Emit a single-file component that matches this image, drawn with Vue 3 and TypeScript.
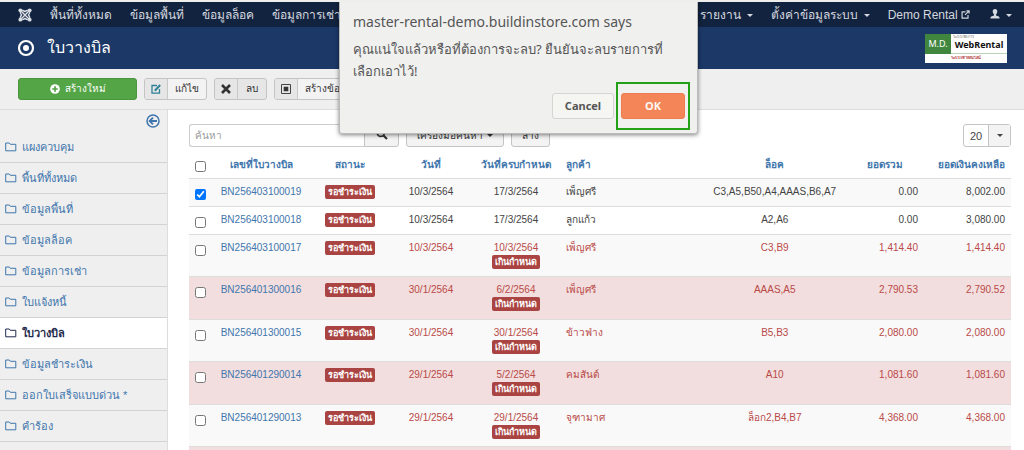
<script setup lang="ts">
import { ref } from 'vue'

interface Invoice {
  no: string
  date: string
  due: string
  customer: string
  lots: string
  total: string
  remaining: string
  overdue: boolean
}

const leftMenu = ['พื้นที่ทั้งหมด', 'ข้อมูลพื้นที่', 'ข้อมูลล็อค', 'ข้อมูลการเช่า']
const rightMenu = ['รายงาน', 'ตั้งค่าข้อมูลระบบ']
const sideMenu = [
  'แผงควบคุม',
  'พื้นที่ทั้งหมด',
  'ข้อมูลพื้นที่',
  'ข้อมูลล็อค',
  'ข้อมูลการเช่า',
  'ใบแจ้งหนี้',
  'ใบวางบิล',
  'ข้อมูลชำระเงิน',
  'ออกใบเสร็จแบบด่วน *',
  'คำร้อง',
]
const current = 'ใบวางบิล'

const invoices: Invoice[] = [
  { no: 'BN256403100019', date: '10/3/2564', due: '17/3/2564', customer: 'เพ็ญศรี', lots: 'C3,A5,B50,A4,AAAS,B6,A7', total: '0.00', remaining: '8,002.00', overdue: false },
  { no: 'BN256403100018', date: '10/3/2564', due: '17/3/2564', customer: 'ลูกแก้ว', lots: 'A2,A6', total: '0.00', remaining: '3,080.00', overdue: false },
  { no: 'BN256403100017', date: '10/3/2564', due: '10/3/2564', customer: 'เพ็ญศรี', lots: 'C3,B9', total: '1,414.40', remaining: '1,414.40', overdue: true },
  { no: 'BN256401300016', date: '30/1/2564', due: '6/2/2564', customer: 'เพ็ญศรี', lots: 'AAAS,A5', total: '2,790.53', remaining: '2,790.52', overdue: true },
  { no: 'BN256401300015', date: '30/1/2564', due: '30/1/2564', customer: 'ข้าวฟ่าง', lots: 'B5,B3', total: '2,080.00', remaining: '2,080.00', overdue: true },
  { no: 'BN256401290014', date: '29/1/2564', due: '5/2/2564', customer: 'คมสันต์', lots: 'A10', total: '1,081.60', remaining: '1,081.60', overdue: true },
  { no: 'BN256401290013', date: '29/1/2564', due: '29/1/2564', customer: 'จุฑามาศ', lots: 'ล็อก2,B4,B7', total: '4,368.00', remaining: '4,368.00', overdue: true },
]

const selected = ref<string[]>(['BN256403100019'])
const search = ref('')
const limit = ref('20')
</script>

<template>
  <div class="page">
    <nav class="topbar">
      <a href="#" class="brand" aria-label="Joomla">
        <svg viewBox="0 0 14 14" width="14" height="14" fill="none" stroke="#d9dde4">
          <path d="M2.500 2.500 9 9M11.500 2.500 5 9M2.500 11.500 9 5M11.500 11.500 5 5" stroke-width="1.500" />
          <path d="M2.200 4.200Q2.400 5.600 3.600 7 2.400 8.400 2.200 9.800M11.800 4.200Q11.600 5.600 10.400 7 11.600 8.400 11.800 9.800M4.200 2.200Q5.600 2.400 7 3.600 8.400 2.400 9.800 2.200M4.200 11.800Q5.600 11.600 7 10.400 8.400 11.600 9.800 11.800" stroke-width="1.400" />
          <g fill="#d9dde4" stroke="none">
            <circle cx="2.300" cy="2.300" r="1.900" /><circle cx="11.700" cy="2.300" r="1.900" />
            <circle cx="2.300" cy="11.700" r="1.900" /><circle cx="11.700" cy="11.700" r="1.900" />
          </g>
        </svg>
      </a>
      <a v-for="item in leftMenu" :key="item" href="#">{{ item }}</a>
      <span class="grow"></span>
      <a v-for="item in rightMenu" :key="item" href="#">{{ item }}<i class="caret"></i></a>
      <a href="#" class="site">Demo Rental
        <svg viewBox="0 0 10 10" width="9" height="9" fill="none" stroke="currentColor" stroke-width="1.300">
          <path d="M5 2H1.200v7h6.600V5.500M6 1h3v3M9 1 4.500 5.500" />
        </svg>
      </a>
      <a href="#" class="user" aria-label="User">
        <svg viewBox="0 0 10 10" width="10" height="10" fill="currentColor">
          <path d="M5 0C3.400 0 2.700 1.200 2.700 2.600c0 1.200.5 2.200 1.300 2.800v1L1.200 7.600Q.4 8 .4 9.500h9.200Q9.600 8 8.800 7.600L6 6.400v-1c.8-.6 1.300-1.600 1.300-2.800C7.300 1.200 6.600 0 5 0z" />
        </svg>
        <i class="caret"></i>
      </a>
    </nav>

    <header class="header">
      <svg viewBox="0 0 18 18" width="18" height="18">
        <circle cx="9" cy="9" r="7" fill="none" stroke="#fff" stroke-width="2.200" />
        <circle cx="9" cy="9" r="3" fill="#fff" />
      </svg>
      <h1>ใบวางบิล</h1>
      <div class="logo">
        <span class="md">M.D.</span>
        <span class="name"><small>ระบบจัดการ</small>WebRental</span>
        <span class="tag">ระบบเช่าออนไลน์</span>
      </div>
    </header>

    <div class="toolbar">
      <button type="button" class="create">
        <svg viewBox="0 0 10 10" width="10" height="10">
          <circle cx="5" cy="5" r="4.800" fill="#fff" />
          <path d="M5 2.200v5.600M2.200 5h5.600" stroke="#54a546" stroke-width="1.700" />
        </svg>
        สร้างใหม่
      </button>
      <button type="button" class="tool edit">
        <span class="ic">
          <svg viewBox="0 0 10 10" width="10" height="10" fill="none" stroke="#2f7f96">
            <path d="M6 1.500H1v7.700h7.500V5" stroke-width="1.300" />
            <path d="M3.800 6.700 9.200 1" stroke-width="2" />
          </svg>
        </span>
        <span class="lb">แก้ไข</span>
      </button>
      <button type="button" class="tool remove">
        <span class="ic">
          <svg viewBox="0 0 10 10" width="10" height="10" stroke="#333" stroke-width="2.600"><path d="M1 1l8 8M9 1 1 9" /></svg>
        </span>
        <span class="lb">ลบ</span>
      </button>
      <button type="button" class="tool make">
        <span class="ic">
          <svg viewBox="0 0 10 10" width="10" height="10"><path d="M.5.5h9v9h-9z" fill="none" stroke="#444" /><path d="M2.700 2.700h4.600v4.600H2.700z" fill="#333" /></svg>
        </span>
        <span class="lb">สร้างข้อมูล</span>
      </button>
    </div>

    <div class="body">
      <aside class="sidebar">
        <button type="button" class="collapse" aria-label="Collapse">
          <svg viewBox="0 0 14 14" width="14" height="14" fill="none" stroke="#3f76ad">
            <circle cx="7" cy="7" r="6" stroke-width="1.500" />
            <path d="M11 7H4M7 3.600 3.600 7 7 10.400" stroke-width="1.800" />
          </svg>
        </button>
        <a v-for="item in sideMenu" :key="item" href="#" :class="{ active: item === current }">
          <svg viewBox="0 0 12 10" width="12" height="10" fill="none" stroke="currentColor">
            <path d="M.7 8.800V1h3.600l1 1.300h5.500v6.500z" />
          </svg>
          {{ item }}
        </a>
      </aside>

      <main class="content">
        <form class="filters" @submit.prevent>
          <div class="group">
            <input v-model="search" type="text" placeholder="ค้นหา" aria-label="ค้นหา" />
            <button type="submit" class="btn find" aria-label="Search">
              <svg viewBox="0 0 12 12" width="12" height="12" fill="none" stroke="#333" stroke-width="1.600">
                <circle cx="4.800" cy="4.800" r="3.600" /><path d="M7.500 7.500 11 11" stroke-width="2.200" />
              </svg>
            </button>
          </div>
          <button type="button" class="btn tools">เครื่องมือค้นหา<i class="caret"></i></button>
          <button type="button" class="btn">ล้าง</button>
          <span class="grow"></span>
          <div class="limit">
            <select v-model="limit" aria-label="Limit"><option>20</option></select>
            <span><i class="caret"></i></span>
          </div>
        </form>

        <table>
          <colgroup>
            <col class="c-check" /><col class="c-no" /><col class="c-status" /><col class="c-date" /><col class="c-due" />
            <col /><col /><col class="c-total" /><col class="c-remaining" />
          </colgroup>
          <thead>
            <tr>
              <th><input type="checkbox" aria-label="All" /></th>
              <th>เลขที่ใบวางบิล</th>
              <th>สถานะ</th>
              <th>วันที่</th>
              <th>วันที่ครบกำหนด</th>
              <th class="left">ลูกค้า</th>
              <th>ล็อค</th>
              <th>ยอดรวม</th>
              <th class="right">ยอดเงินคงเหลือ</th>
            </tr>
          </thead>
          <tbody>
            <tr v-for="row in invoices" :key="row.no" :class="{ overdue: row.overdue }">
              <td><input v-model="selected" type="checkbox" :value="row.no" :aria-label="row.no" /></td>
              <td><a href="#">{{ row.no }}</a></td>
              <td><span class="badge">รอชำระเงิน</span></td>
              <td>{{ row.date }}</td>
              <td>{{ row.due }}<span v-if="row.overdue" class="badge late">เกินกำหนด</span></td>
              <td class="left">{{ row.customer }}</td>
              <td>{{ row.lots }}</td>
              <td class="right">{{ row.total }}</td>
              <td class="right">{{ row.remaining }}</td>
            </tr>
            <tr class="overdue"><td colspan="9"></td></tr>
          </tbody>
        </table>
      </main>
    </div>

    <div class="dialog" role="alertdialog" aria-labelledby="dialog-title">
      <h2 id="dialog-title">master-rental-demo.buildinstore.com says</h2>
      <p>คุณแน่ใจแล้วหรือที่ต้องการจะลบ? ยืนยันจะลบรายการที่<wbr />เลือกเอาไว้!</p>
      <div class="actions">
        <button type="button" class="cancel">Cancel</button>
        <span class="mark"><button type="button" class="ok">OK</button></span>
      </div>
    </div>
  </div>
</template>

<style>
html,
body {
  margin: 0;
  height: 100%;
  overflow: hidden;
  background: #fff;
}
#app {
  height: 100%;
}
</style>

<style scoped>
.page {
  position: relative;
  display: flex;
  flex-direction: column;
  height: 100%;
  overflow: hidden;
  border-top: 2px solid #eeeeec;
  box-sizing: border-box;
  font: 10px/14px 'Liberation Sans', Arial, sans-serif;
  color: #444;
}
.page * {
  box-sizing: border-box;
}
a {
  text-decoration: none;
  color: #3f76ad;
}
button,
input,
select {
  font: inherit;
  color: inherit;
  margin: 0;
}
svg {
  flex: none;
}
.grow {
  flex: 1;
}
.caret {
  display: inline-block;
  border: 3px solid transparent;
  border-top-color: currentColor;
  border-bottom: 0;
  vertical-align: middle;
}
.topbar {
  flex: none;
  display: flex;
  align-items: center;
  gap: 18px;
  height: 25px;
  padding: 0 12px 0 18px;
  background: #12233f;
  font-size: 12px;
}
.topbar a {
  color: #d4d8df;
  white-space: nowrap;
}
.topbar .brand {
  display: flex;
}
.topbar .caret {
  margin-left: 6px;
}
.topbar .user {
  margin-left: 2px;
}
.header {
  flex: none;
  display: flex;
  align-items: center;
  gap: 12px;
  height: 42px;
  padding: 0 17px;
  background: #1b3867;
}
.header h1 {
  flex: 1;
  margin: 0;
  font-size: 16px;
  line-height: 26px;
  font-weight: 400;
  color: #fff;
}
.logo {
  display: grid;
  grid-template-columns: 26px 1fr;
  grid-template-rows: 20px 9px;
  width: 82px;
  background: #fff;
}
.logo .md {
  background: #41863f;
  color: #fff;
  font: 9px/20px 'Noto Sans', sans-serif;
  text-align: center;
}
.logo .name {
  display: flex;
  flex-direction: column;
  color: #111;
  font: bold 9px/12px 'Noto Sans', sans-serif;
  border-bottom: 1px solid #b8d6b8;
  text-align: center;
}
.logo small {
  font: 4px/5px 'Liberation Sans', sans-serif;
  color: #777;
  text-align: left;
  padding-left: 2px;
}
.logo .tag {
  grid-column: 1 / 3;
  color: #b03a3a;
  font-size: 4px;
  line-height: 8px;
  font-weight: 700;
  text-align: center;
}
.toolbar {
  flex: none;
  display: flex;
  align-items: center;
  gap: 7px;
  height: 41px;
  padding: 0 18px;
  background: #efefef;
  border-bottom: 1px solid #ddd;
}
.toolbar button {
  display: flex;
  align-items: center;
  height: 22px;
  padding: 0;
  border: 1px solid #c4c4c4;
  border-radius: 3px;
  white-space: nowrap;
}
.toolbar .create {
  justify-content: center;
  gap: 5px;
  width: 119px;
  border-color: #4a953d;
  background: #54a546;
  color: #fff;
}
.tool {
  background: #f3f3f3;
  color: #333;
  overflow: hidden;
}
.tool .ic {
  display: flex;
  align-items: center;
  justify-content: center;
  width: 23px;
  height: 20px;
  background: #e6e6e6;
  border-right: 1px solid #c8c8c8;
}
.tool .lb {
  flex: 1;
  text-align: center;
}
.edit {
  width: 63px;
}
.toolbar .remove {
  width: 53px;
  background: #e6e6e6;
}
.make {
  width: 86px;
}
.body {
  flex: 1;
  display: flex;
  min-height: 0;
}
.sidebar {
  flex: none;
  width: 168px;
  background: #efefef;
  border-right: 1px solid #ddd;
}
.collapse {
  display: flex;
  margin: 4px 7px 4px auto;
  padding: 0;
  border: 0;
  background: none;
}
.sidebar a {
  display: flex;
  align-items: center;
  gap: 5px;
  height: 31px;
  padding-left: 5px;
  border-bottom: 1px solid #d3d3d3;
  font-size: 11px;
}
.sidebar .active {
  background: #fff;
  color: #1f2a4d;
  font-weight: 700;
}
.content {
  flex: 1;
  min-width: 0;
  padding: 14px 13px 0 21px;
}
.filters {
  display: flex;
  gap: 7px;
  height: 23px;
}
.group {
  display: flex;
}
.group input {
  width: 175px;
  padding: 0 5px;
  border: 1px solid #ccc;
  border-right: 0;
  border-radius: 3px 0 0 3px;
}
.group input::placeholder {
  color: #999;
  opacity: 1;
}
.btn {
  padding: 0 10px;
  border: 1px solid #c4c4c4;
  border-radius: 3px;
  background: #f3f3f3;
  color: #333;
  white-space: nowrap;
}
.find {
  width: 35px;
  padding: 0;
  border-radius: 0 3px 3px 0;
}
.tools .caret {
  margin-left: 4px;
}
.limit {
  position: relative;
  width: 48px;
}
.limit select {
  width: 100%;
  height: 23px;
  padding: 0 6px;
  border: 1px solid #c4c4c4;
  border-radius: 3px;
  background: #fff;
  appearance: none;
  font-size: 11px;
}
.limit span {
  position: absolute;
  inset: 1px 1px 1px auto;
  display: flex;
  align-items: center;
  justify-content: center;
  width: 22px;
  border-left: 1px solid #c4c4c4;
  background: #f3f3f3;
  pointer-events: none;
}
table {
  width: 100%;
  margin-top: 5px;
  table-layout: fixed;
  border-collapse: separate;
  border-spacing: 0;
}
.c-check {
  width: 24px;
}
.c-no {
  width: 96px;
}
.c-status {
  width: 82px;
}
.c-date {
  width: 80px;
}
.c-due {
  width: 90px;
}
.c-total {
  width: 78px;
}
.c-remaining {
  width: 87px;
}
th {
  height: 26px;
  padding: 0;
  color: #3f76ad;
  font-weight: 700;
  text-align: center;
  white-space: nowrap;
}
td {
  height: 28px;
  padding: 6px 0 0;
  border-top: 1px solid #ddd;
  text-align: center;
  vertical-align: top;
  white-space: nowrap;
}
.left {
  padding-left: 5px;
  text-align: left;
}
.right {
  padding-right: 6px;
  text-align: right;
}
tbody tr:nth-child(odd) td {
  background: #f9f9f9;
}
tbody .overdue td {
  height: 42px;
  color: #b94a48;
}
tbody .overdue:nth-child(even) td {
  height: 43px;
  background: #f2dede;
}
input[type='checkbox'] {
  display: block;
  width: 11px;
  height: 11px;
  margin: 2px 0 0 6px;
}
td input[type='checkbox'] {
  margin-top: 4px;
}
.badge {
  display: inline-block;
  height: 14px;
  padding: 0 3px;
  border-radius: 2px;
  background: #a94442;
  color: #fff;
  font-size: 9px;
  line-height: 14px;
  font-weight: 700;
  vertical-align: top;
}
.late {
  display: block;
  width: max-content;
  margin: 0 auto;
}
.dialog {
  position: absolute;
  top: -2px;
  left: 339px;
  width: 359px;
  padding: 13px 7px 3px 13px;
  border: 1px solid #bbb;
  border-top: 0;
  border-radius: 0 0 3px 3px;
  background: #f0f0ef;
  box-shadow: 0 1px 4px rgba(0, 0, 0, 0.5);
  color: #555;
  font-family: 'Noto Sans', 'Open Sans', sans-serif;
}
.dialog h2 {
  margin: 0 0 7px;
  font-size: 14px;
  line-height: 18px;
  font-weight: 400;
}
.dialog p {
  max-width: 325px;
  margin: 0;
  font-size: 13px;
  line-height: 22px;
}
.actions {
  display: flex;
  align-items: center;
  justify-content: flex-end;
  gap: 2px;
}
.actions button {
  display: block;
  height: 26px;
  padding: 0;
  border-radius: 3px;
  font-size: 11px;
  font-weight: 700;
}
.actions .cancel {
  width: 62px;
  border: 1px solid #d5d5d3;
  background: #f5f5f2;
}
.mark {
  padding: 9px 3px;
  border: 2px solid #23a015;
}
.actions .ok {
  width: 64px;
  border: 1px solid #ee7c50;
  background: #f38559;
  color: #fff5ee;
}
</style>
